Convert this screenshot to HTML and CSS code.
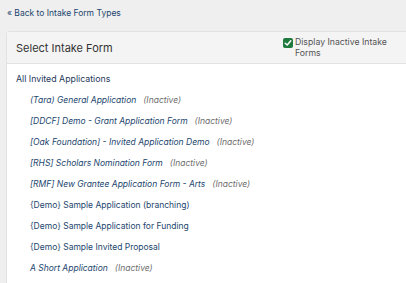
FILE: index.html
```html
<!DOCTYPE html>
<html lang="en">
<head>
<meta charset="UTF-8" />
<title>Select Intake Form</title>
<link rel="stylesheet" href="styles.css">
</head>
<body>
<a class="back-link" href="#">« Back to Intake Form Types</a>
<div class="card">
  <div class="card-header">
    <h3>Select Intake Form</h3>
    <label class="inactive-toggle">
      <span class="check">
        <svg width="8" height="8" viewBox="0 0 8 8"><path d="M1.2 4.2 L3.2 6 L6.8 1.8" fill="none" stroke="#fff" stroke-width="1.5" stroke-linecap="round" stroke-linejoin="round"/></svg>
      </span>
      <span>Display Inactive Intake Forms</span>
    </label>
  </div>
  <div class="card-body">
    <div class="group-title">All Invited Applications</div>
    <ul class="form-list">
      <li class="inactive"><a href="#">(Tara) General Application</a><span class="status">(Inactive)</span></li>
      <li class="inactive"><a href="#">[DDCF] Demo - Grant Application Form</a><span class="status">(Inactive)</span></li>
      <li class="inactive"><a href="#">[Oak Foundation] - Invited Application Demo</a><span class="status">(Inactive)</span></li>
      <li class="inactive"><a href="#">[RHS] Scholars Nomination Form</a><span class="status">(Inactive)</span></li>
      <li class="inactive"><a href="#">[RMF] New Grantee Application Form - Arts</a><span class="status">(Inactive)</span></li>
      <li><a href="#">{Demo} Sample Application (branching)</a></li>
      <li><a href="#">{Demo} Sample Application for Funding</a></li>
      <li><a href="#">{Demo} Sample Invited Proposal</a></li>
      <li class="inactive"><a href="#">A Short Application</a><span class="status">(Inactive)</span></li>
    </ul>
  </div>
</div>
</body>
</html>
```

FILE: styles.css
```css
body {
  margin: 0;
  padding: 6px 0 0 6px;
  background: #efefef;
  font-family: Inter, "Noto Sans", sans-serif;
  overflow: hidden;
  width: 400px;
  height: 277px;
}
.back-link {
  display: block;
  margin-left: 1px;
  height: 14px;
  line-height: 14px;
  font-size: 8.5px;
  color: #23466e;
  text-decoration: none;
}
.card {
  margin-top: 11px;
  width: 420px;
  background: #fff;
  border: 1px solid #e2e2e2;
  border-radius: 3px 0 0 0;
}
.card-header {
  display: flex;
  align-items: center;
  justify-content: space-between;
  height: 31px;
  padding: 0 34px 0 9px;
  background: #f4f4f4;
  border-bottom: 1px solid #e2e2e2;
}
.card-header h3 {
  margin: 0;
  font-size: 11px;
  font-weight: 400;
  color: #333;
}
.inactive-toggle {
  display: flex;
  align-items: flex-start;
  gap: 2px;
  width: 110px;
  font-size: 8.7px;
  line-height: 11px;
  color: #555;
}
.check {
  flex: none;
  width: 10px;
  height: 10px;
  margin-top: 1px;
  border-radius: 2px;
  background: #1f7a3d;
  display: flex;
  align-items: center;
  justify-content: center;
}
.card-body {
  padding: 8px 9px;
}
.group-title {
  font-size: 8.8px;
  color: #1f3a5c;
  line-height: 14px;
}
.form-list {
  list-style: none;
  margin: 0;
  padding: 0 0 0 14px;
}
.form-list li {
  margin-top: 7px;
  line-height: 14px;
  font-size: 8.5px;
}
.form-list a {
  color: #23466e;
  text-decoration: none;
}
.form-list li.inactive a {
  font-style: italic;
}
.status {
  margin-left: 7px;
  font-style: italic;
  color: #6e6e6e;
}
```
